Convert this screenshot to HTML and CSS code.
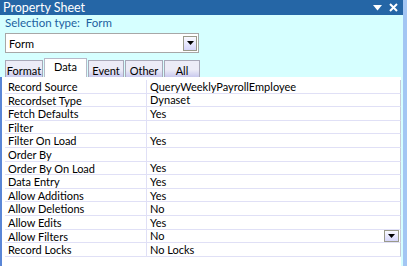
FILE: index.html
```html
<!DOCTYPE html>
<html lang="en">
<head>
    <meta charset="UTF-8">
    <title>Property Sheet</title>
    <link rel="stylesheet" href="styles.css">
</head>
<body>

<div class="sheet">
    <div class="titlebar">
        <span class="title">Property Sheet</span>
        <span class="title-tools">
            <svg width="9" height="6" viewBox="0 0 9 6"><path d="M0 0 H9 L4.5 5.5 Z" fill="#fff"/></svg>
            <svg width="9" height="9" viewBox="0 0 9 9"><path d="M1 1 L8 8 M8 1 L1 8" stroke="#fff" stroke-width="2"/></svg>
        </span>
    </div>

    <div class="selection">Selection type:&nbsp; Form</div>

    <div class="combo">
        <span>Form</span>
        <span class="drop-btn"><svg width="7" height="4" viewBox="0 0 7 4"><path d="M0 0 H7 L3.5 4 Z" fill="#000"/></svg></span>
    </div>

    <div class="tabs">
        <div class="tab tab-format">Format</div>
        <div class="tab active">Data</div>
        <div class="tab tab-event">Event</div>
        <div class="tab tab-other">Other</div>
        <div class="tab tab-all">All</div>
    </div>

    <div class="grid">
        <div class="row"><div class="name">Record Source</div><div class="value">QueryWeeklyPayrollEmployee</div></div>
        <div class="row"><div class="name">Recordset Type</div><div class="value">Dynaset</div></div>
        <div class="row"><div class="name">Fetch Defaults</div><div class="value">Yes</div></div>
        <div class="row"><div class="name">Filter</div><div class="value"></div></div>
        <div class="row"><div class="name">Filter On Load</div><div class="value">Yes</div></div>
        <div class="row"><div class="name">Order By</div><div class="value"></div></div>
        <div class="row"><div class="name">Order By On Load</div><div class="value">Yes</div></div>
        <div class="row"><div class="name">Data Entry</div><div class="value">Yes</div></div>
        <div class="row"><div class="name">Allow Additions</div><div class="value">Yes</div></div>
        <div class="row"><div class="name">Allow Deletions</div><div class="value">No</div></div>
        <div class="row"><div class="name">Allow Edits</div><div class="value">Yes</div></div>
        <div class="row"><div class="name">Allow Filters</div><div class="value">No<span class="drop-btn small"><svg width="7" height="4" viewBox="0 0 7 4"><path d="M0 0 H7 L3.5 4 Z" fill="#000"/></svg></span></div></div>
        <div class="row"><div class="name">Record Locks</div><div class="value">No Locks</div></div>
    </div>
</div>

</body>
</html>
```

FILE: styles.css
```css
body {
    margin: 0;
    width: 407px;
    height: 266px;
    overflow: hidden;
    font-family: Lato, "Noto Sans", sans-serif;
    font-size: 11px;
    background-color: #d6ffff;
}
.sheet {
    height: 266px;
    border-right: 4px solid #a3c6f3;
    display: flex;
    flex-direction: column;
}
.titlebar {
    height: 15px;
    background-color: #2566a6;
    color: #fff;
    display: flex;
    align-items: center;
    justify-content: space-between;
    padding: 0 5px 0 3px;
    font-size: 12.5px;
}
.title-tools {
    display: flex;
    align-items: center;
    gap: 7px;
}
.selection {
    color: #1d5fa0;
    padding: 1px 0 0 5px;
    height: 16px;
    font-size: 11.5px;
}
.combo {
    margin: 1px 0 0 5px;
    width: 189px;
    height: 18px;
    background-color: #fff;
    border: 1px solid #a7a7a7;
    display: flex;
    align-items: center;
    justify-content: space-between;
    padding-left: 3px;
}
.drop-btn {
    width: 12px;
    height: 13px;
    margin-right: 1px;
    border: 1px solid #9a9a8a;
    background: linear-gradient(#fafaff, #d6d6fa);
    display: flex;
    align-items: center;
    justify-content: center;
}
.tabs {
    display: flex;
    margin: 5px 0 0 5px;
    height: 19px;
    align-items: flex-end;
}
.tab {
    height: 17px;
    box-sizing: border-box;
    margin-right: 1px;
    border: 1px solid #a8a8b8;
    border-bottom: none;
    background: linear-gradient(#ececf7 55%, #c9c9ee);
    display: flex;
    align-items: center;
    justify-content: center;
    padding-top: 2px;
}
.tab-format { width: 38px; }
.tab-event { width: 36px; }
.tab-other { width: 38px; }
.tab-all { width: 36px; }
.tab.active {
    height: 19px;
    width: 43px;
    background: #fff;
    border-color: #b8b8c8;
    align-items: flex-start;
    padding-top: 1px;
}
.grid {
    flex: 1;
    margin-right: 2px;
    background-color: #fff;
    border-left: 2px solid #5a86d6;
    padding: 3px 0 0 3px;
}
.row {
    display: flex;
    height: 12.6px;
    border-bottom: 1px solid #e0e0f6;
    line-height: 13px;
    border-right: 1px solid #c8c8d8;
}
.name {
    width: 138px;
    padding-left: 3px;
    border-right: 1px solid #e0e0f6;
}
.value {
    flex: 1;
    padding-left: 3px;
    display: flex;
    justify-content: space-between;
    align-items: center;
}
.drop-btn.small {
    width: 13px;
    height: 10px;
    margin-right: 1px;
}
```
